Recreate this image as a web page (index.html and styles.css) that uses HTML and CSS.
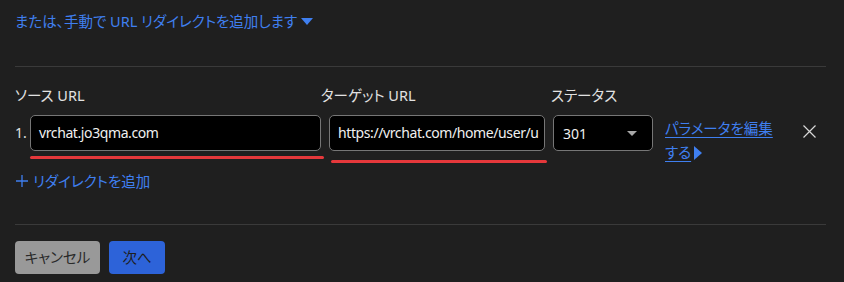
FILE: index.html
```html
<!DOCTYPE html>
<html lang="ja">
<head>
<meta charset="utf-8">
<link rel="stylesheet" href="styles.css">
</head>
<body>
<div class="panel">
  <div class="toggle">または、手動で URL リダイレクトを追加します<span class="caret-down"></span></div>
  <div class="rule rule-top"></div>

  <div class="labels">
    <div class="lbl lbl-src">ソース URL</div>
    <div class="lbl lbl-tgt">ターゲット URL</div>
    <div class="lbl lbl-st">ステータス</div>
  </div>

  <div class="row">
    <div class="num">1.</div>
    <div class="field field-src">
      <div class="input">vrchat.jo3qma.com</div>
      <div class="mark mark-src"></div>
    </div>
    <div class="field field-tgt">
      <div class="input">https://vrchat.com/home/user/u</div>
      <div class="mark mark-tgt"></div>
    </div>
    <div class="select"><span class="sel-val">301</span><span class="sel-caret"></span></div>
    <div class="params"><span class="plink">パラメータを編集する</span><span class="caret-right"></span></div>
    <div class="close">
      <svg width="13" height="13" viewBox="0 0 13 13"><path d="M0.5 0.5 L12.5 12.5 M12.5 0.5 L0.5 12.5" stroke="#d8d8d8" stroke-width="1.2" fill="none"/></svg>
    </div>
  </div>

  <div class="add">
    <svg class="plus" width="12" height="12" viewBox="0 0 12 12"><path d="M6 0 V12 M0 6 H12" stroke="#3f7ff0" stroke-width="1.3" fill="none"/></svg>
    <span>リダイレクトを追加</span>
  </div>
  <div class="rule rule-bottom"></div>

  <div class="buttons">
    <div class="btn btn-cancel">キャンセル</div>
    <div class="btn btn-next">次へ</div>
  </div>
</div>
</body>
</html>
```

FILE: styles.css
```css
* { box-sizing: border-box; }
html, body { margin: 0; padding: 0; }
body {
  background: #1f1f1f;
  font-family: "Noto Sans", "Noto Sans CJK JP", sans-serif;
  font-size: 14px;
  font-feature-settings: "palt";
  color: #e2e2e2;
  width: 844px;
  height: 282px;
  overflow: hidden;
}
.panel { padding: 11px 18px 0 15px; }

.toggle {
  color: #3f7ff0;
  font-size: 14.5px;
  line-height: 20px;
  display: flex;
  align-items: center;
}
.caret-down {
  display: inline-block;
  width: 0; height: 0;
  margin-left: 4px;
  border-left: 6.5px solid transparent;
  border-right: 6.5px solid transparent;
  border-top: 7px solid #3f7ff0;
}

.rule { height: 1px; background: #3a3a3a; }
.rule-top { margin-top: 35px; }
.rule-bottom { margin-top: 33px; }

.labels { display: flex; margin-top: 18px; line-height: 20px; font-size: 14.5px; }
.lbl-src { width: 306px; }
.lbl-tgt { width: 230px; }

.row { display: flex; align-items: flex-start; margin-top: 10px; }
.num { width: 15px; line-height: 36px; }
.field-src { width: 291px; }
.field-tgt { width: 216px; margin-left: 8px; }
.input {
  height: 36px;
  background: #000;
  border: 1px solid #767676;
  border-radius: 5px;
  padding: 0 8px;
  line-height: 34px;
  white-space: nowrap;
  overflow: hidden;
  color: #f0f0f0;
  letter-spacing: -0.4px;
}
.mark { height: 3px; background: #e5383b; border-radius: 2px; }
.mark-src { margin-top: 5px; width: 294px; }
.mark-tgt { margin-top: 9px; margin-left: 2px; width: 216px; }

.select {
  width: 100px;
  height: 36px;
  margin-left: 8px;
  background: #000;
  border: 1px solid #767676;
  border-radius: 5px;
  padding: 0 9px;
  display: flex;
  align-items: center;
  justify-content: space-between;
  color: #f0f0f0;
}
.sel-caret {
  width: 0; height: 0;
  margin-right: 6px;
  border-left: 5px solid transparent;
  border-right: 5px solid transparent;
  border-top: 5px solid #a8a8a8;
}

.params {
  width: 118px;
  margin-left: 12px;
  margin-top: 1px;
  line-height: 24px;
  color: #3f7ff0;
  font-size: 14.5px;
}
.plink { text-decoration: underline; text-underline-offset: 3px; }
.caret-right {
  display: inline-block;
  width: 0; height: 0;
  margin-left: 3px;
  vertical-align: -2px;
  border-top: 7px solid transparent;
  border-bottom: 7px solid transparent;
  border-left: 8px solid #3f7ff0;
}
.close { margin-left: 20px; margin-top: 10px; display: flex; }

.add {
  margin-top: 7px;
  line-height: 20px;
  color: #3f7ff0;
  font-size: 14.5px;
  display: flex;
  align-items: center;
  gap: 5px;
}
.plus { margin-left: 1px; }

.buttons { display: flex; gap: 9px; margin-top: 16px; }
.btn {
  height: 33px;
  line-height: 33px;
  border-radius: 4px;
  text-align: center;
  font-size: 14.5px;
}
.btn-cancel { width: 85px; background: #999999; color: #2a2a2a; }
.btn-next { width: 56px; background: #2d63d9; color: #1e1e1e; }
```
